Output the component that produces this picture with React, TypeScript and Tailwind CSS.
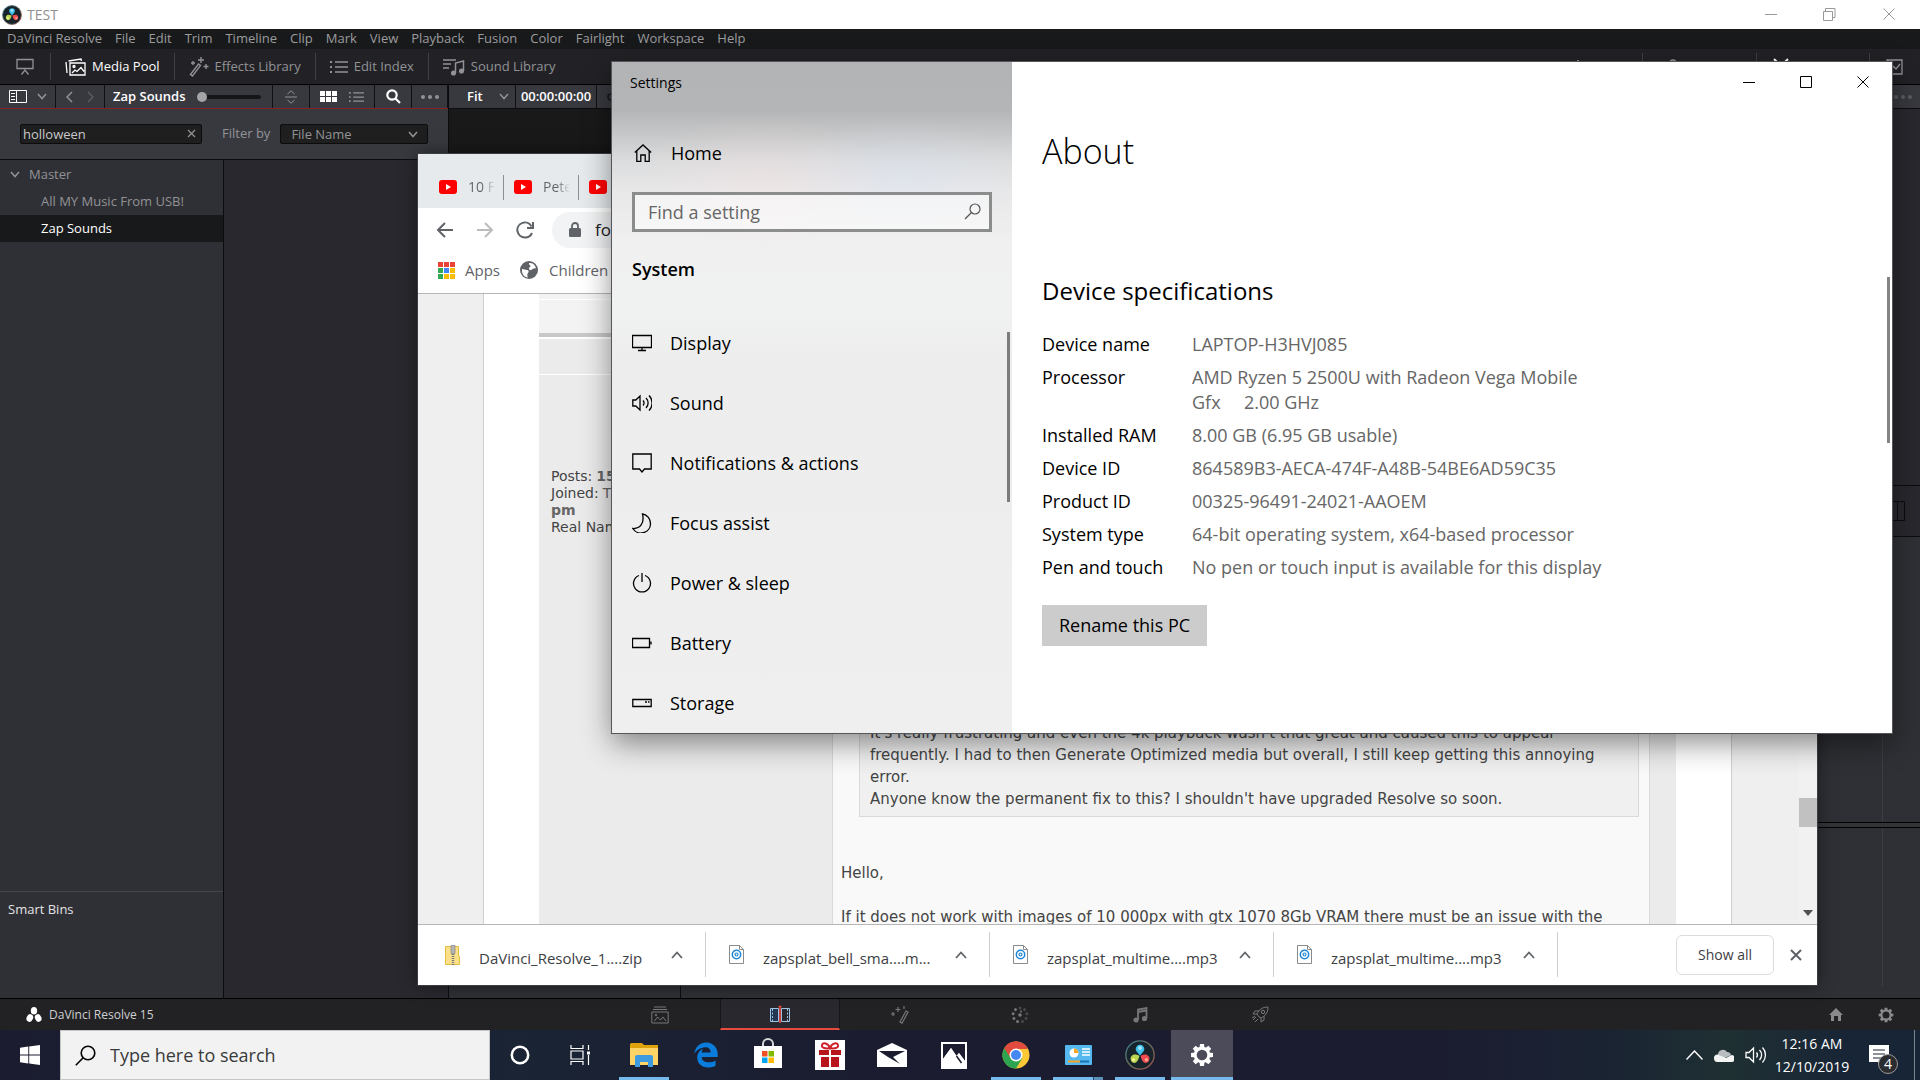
import type { ReactNode } from 'react'
import { FaEdgeLegacy } from 'react-icons/fa'

const MENUS = [
  'DaVinci Resolve', 'File', 'Edit', 'Trim', 'Timeline', 'Clip', 'Mark', 'View',
  'Playback', 'Fusion', 'Color', 'Fairlight', 'Workspace', 'Help',
]

const SPECS = [
  ['Device name', 'LAPTOP-H3HVJ085'],
  ['Processor', 'AMD Ryzen 5 2500U with Radeon Vega Mobile Gfx     2.00 GHz'],
  ['Installed RAM', '8.00 GB (6.95 GB usable)'],
  ['Device ID', '864589B3-AECA-474F-A48B-54BE6AD59C35'],
  ['Product ID', '00325-96491-24021-AAOEM'],
  ['System type', '64-bit operating system, x64-based processor'],
  ['Pen and touch', 'No pen or touch input is available for this display'],
]

const DOWNLOADS = [
  { name: 'DaVinci_Resolve_1....zip', zip: true },
  { name: 'zapsplat_bell_sma....m...', zip: false },
  { name: 'zapsplat_multime....mp3', zip: false },
  { name: 'zapsplat_multime....mp3', zip: false },
]

interface IconProps {
  w: number
  h: number
  className?: string
  stroke?: number
  children: ReactNode
}

// Line icon drawn 1:1 in pixels
function Icon({ w, h, className = '', stroke = 1, children }: IconProps) {
  return (
    <svg
      width={w}
      height={h}
      viewBox={`0 0 ${w} ${h}`}
      fill="none"
      stroke="currentColor"
      strokeWidth={stroke}
      className={`shrink-0 ${className}`}
      aria-hidden="true"
    >
      {children}
    </svg>
  )
}

function Chevron({ className = '' }: { className?: string }) {
  return (
    <Icon w={10} h={7} stroke={1.5} className={className}>
      <path d="M1 1l4 4.5L9 1" />
    </Icon>
  )
}

function ResolveLogo({ size }: { size: number }) {
  return (
    <svg width={size} height={size} viewBox="0 0 28 28" className="shrink-0" aria-hidden="true">
      <circle cx="14" cy="14" r="13.2" fill="#17242c" stroke="url(#ring)" strokeWidth="1.2" />
      <path d="M14 14.5C10.5 11 10 9.500 10 8.500a4 4 0 018 0c0 1-.5 2.500-4 6z" fill="#3fc0ea" />
      <path d="M13.500 14.800c-1.200 4.800-2.600 6.200-4.300 6.700A4 4 0 017.300 14c1.700-.6 3.200-.5 6.200.8z" fill="#b9d653" />
      <path d="M14.500 14.800c1.200 4.800 2.600 6.200 4.300 6.700A4 4 0 0020.700 14c-1.700-.6-3.200-.5-6.200.8z" fill="#ee4b50" />
      <circle cx="14" cy="7.500" r="1.800" fill="#a5e6fb" />
      <circle cx="8" cy="18.500" r="1.600" fill="#f3ef8a" />
      <circle cx="20" cy="18.500" r="1.600" fill="#fba08f" />
      <defs>
        <linearGradient id="ring" x1="0" y1="0" x2="1" y2="1">
          <stop offset="0" stopColor="#3b7f96" />
          <stop offset=".5" stopColor="#6e6f5a" />
          <stop offset="1" stopColor="#a0524a" />
        </linearGradient>
      </defs>
    </svg>
  )
}

function GearIcon({ size, className = '' }: { size: number; className?: string }) {
  const teeth = [0, 45, 90, 135, 180, 225, 270, 315]
  return (
    <svg width={size} height={size} viewBox="0 0 24 24" className={className} aria-hidden="true">
      <circle cx="12" cy="12" r="6.800" fill="none" stroke="currentColor" strokeWidth="3" />
      {teeth.map((a) => (
        <path key={a} d="M10 1h4l.6 4.500h-5.200z" fill="currentColor" transform={`rotate(${a} 12 12)`} />
      ))}
    </svg>
  )
}

function SpeakerIcon({ className = '' }: { className?: string }) {
  return (
    <Icon w={22} h={18} stroke={1.3} className={className}>
      <path d="M1 6.500h3L8.500 2v14L4 11.500H1zM11.500 6.500a4 4 0 010 5M14.500 4a7 7 0 010 10M17.500 1.500a11 11 0 010 15" />
    </Icon>
  )
}

function ToolButton({ label, active, children }: { label: string; active?: boolean; children: ReactNode }) {
  return (
    <button
      className={`flex h-[27px] items-center gap-[6px] border-l border-[#3e3e43] px-[14px] text-[13px] ${
        active ? 'text-white' : 'text-[#929296]'
      }`}
    >
      {children}
      {label}
    </button>
  )
}

function ListIcon({ className = '' }: { className?: string }) {
  return (
    <Icon w={18} h={14} stroke={2} className={className}>
      <path d="M0 2h2M0 7h2M0 12h2" />
      <path d="M5 2h13M5 7h13M5 12h13" strokeWidth={1.5} />
    </Icon>
  )
}

function ResolveHeader() {
  return (
    <>
      <div className="flex h-[29px] items-center bg-white text-[#8f8f8f]">
        <div className="flex flex-1 items-center gap-[5px] pl-[2px] text-[14px]">
          <ResolveLogo size={20} />
          TEST
        </div>
        <div className="flex text-[#999]">
          <button aria-label="Minimize" className="flex w-[58px] justify-center">
            <Icon w={12} h={12}><path d="M0 6.500h12" /></Icon>
          </button>
          <button aria-label="Restore" className="flex w-[58px] justify-center">
            <Icon w={13} h={13}><path d="M.5 3.500h9v9h-9zM2.500 3.500v-3h9.500v9h-2.500" /></Icon>
          </button>
          <button aria-label="Close" className="flex w-[62px] justify-center">
            <Icon w={12} h={12}><path d="M.5.500l11 11M11.500.500l-11 11" /></Icon>
          </button>
        </div>
      </div>
      <nav className="flex h-5 items-center gap-[13px] bg-[#18191b] pl-[7px] text-[13px] text-[#9c9c9e]">
        {MENUS.map((m) => (
          <button key={m}>{m}</button>
        ))}
      </nav>
      <div className="flex h-[35px] items-center bg-[#222226] text-[#929296]">
        <button aria-label="Layout" className="flex w-[50px] justify-center">
          <Icon w={18} h={18} stroke={1.3}>
            <path d="M1 1.500h16v9h-16zM5.500 16.500l3.500-4.500 3.500 4.500" />
          </Icon>
        </button>
        <ToolButton label="Media Pool" active>
          <Icon w={21} h={18} stroke={1.3}>
            <path d="M1 4l1 11M3.500 3l12.500-2 .5 2M5 5h15v12H5zM7 15l3-3 2 1.500 4-4 3 4" />
            <circle cx="9" cy="8.500" r="1" />
          </Icon>
        </ToolButton>
        <ToolButton label="Effects Library">
          <Icon w={20} h={20} stroke={1.4}>
            <path d="M1.500 17.500l8-10.500 2 1.500-8 10.500zM12 0v6M9 3h6M17 7v5M14.500 9.500h5M4 4v4M2 6h4" />
          </Icon>
        </ToolButton>
        <ToolButton label="Edit Index">
          <ListIcon />
        </ToolButton>
        <ToolButton label="Sound Library">
          <Icon w={22} h={18} stroke={1.5}>
            <path d="M0 2h13M0 6h8M0 10h6M12.500 15V5l8-2v10" />
            <circle cx="10.500" cy="15" r="1.800" fill="currentColor" />
            <circle cx="18.500" cy="13" r="1.800" fill="currentColor" />
          </Icon>
        </ToolButton>
        <div className="ml-auto flex">
          <button aria-label="Mixer" className="flex h-[27px] w-[85px] items-center pl-[14px]">
            <Icon w={16} h={16} stroke={2}><path d="M2 2v13M7 1v14M12 2v13" strokeDasharray="3 2" /></Icon>
          </button>
          <button aria-label="Metadata" className="flex h-[27px] w-[114px] items-center border-l border-[#3e3e43] pl-[22px]">
            <Icon w={16} h={16} stroke={1.3}><circle cx="8" cy="5" r="4" /></Icon>
          </button>
          <button aria-label="Inspector" className="flex h-[27px] w-[113px] items-center border-l border-[#3e3e43] pl-4 text-white">
            <Icon w={16} h={18} stroke={2}><path d="M1 1l14 14M15 1L1 15" /></Icon>
          </button>
          <button aria-label="Expand" className="flex h-[27px] w-[51px] items-center border-l border-[#3e3e43] pl-4">
            <Icon w={17} h={16} stroke={1.3}><path d="M1 1h15v14H1zM7 7l3 3 4-5" /></Icon>
          </button>
        </div>
      </div>
    </>
  )
}

function MediaPool() {
  return (
    <div className="flex w-[449px] shrink-0 flex-col border-r border-[#0c0c0e]">
      <div className="flex h-6 items-center border-b border-[#8a2323] bg-[#38393f] text-[#929296] *:h-full *:border-r *:border-[#101012]">
        <button aria-label="Bin list" className="flex w-14 items-center gap-[10px] pl-[9px]">
          <Icon w={18} h={13} className="text-white">
            <path d="M.5.500h17v12H.5zM7.500.500v12M2 3.500h4M2 6.500h4M2 9.500h4" />
          </Icon>
          <Chevron />
        </button>
        <div className="flex w-[49px] items-center justify-center gap-[14px]">
          <button aria-label="Back"><Icon w={7} h={12} stroke={1.5}><path d="M6 1L1 6l5 5" /></Icon></button>
          <button aria-label="Forward" className="text-[#5c5c62]"><Icon w={7} h={12} stroke={1.5}><path d="M1 1l5 5-5 5" /></Icon></button>
        </div>
        <div className="flex w-[168px] items-center gap-[11px] pl-2 text-[13px] font-semibold text-white">
          Zap Sounds
          <input type="range" aria-label="Thumbnail size" defaultValue={0}
            className="h-1 w-[64px] appearance-none rounded-full bg-[#161618] [&::-webkit-slider-thumb]:size-[10px] [&::-webkit-slider-thumb]:appearance-none [&::-webkit-slider-thumb]:rounded-full [&::-webkit-slider-thumb]:bg-[#a5a5a8]"
          />
        </div>
        <button aria-label="Sort" className="flex w-[37px] items-center justify-center">
          <Icon w={12} h={14}><path d="M2.500 4L6 .8 9.500 4M0 7h12M2.500 10L6 13.200 9.500 10" /></Icon>
        </button>
        <div className="flex w-[65px] items-center gap-3 pl-[10px]">
          <button aria-label="Thumbnails" className="text-white">
            <Icon w={17} h={11} stroke={5}><path d="M0 2.500h5M6 2.500h5M12 2.500h5M0 8.500h5M6 8.500h5M12 8.500h5" /></Icon>
          </button>
          <button aria-label="List"><ListIcon className="h-3 w-[15px]" /></button>
        </div>
        <button aria-label="Search" className="flex w-[37px] items-center justify-center text-white">
          <Icon w={15} h={15} stroke={2.2}><circle cx="6" cy="6" r="4.700" /><path d="M9.500 9.500L14 14" /></Icon>
        </button>
        <button aria-label="Options" className="flex flex-1 items-center justify-center">
          <Icon w={18} h={4} className="fill-current stroke-none"><circle cx="2" cy="2" r="2" /><circle cx="9" cy="2" r="2" /><circle cx="16" cy="2" r="2" /></Icon>
        </button>
      </div>
      <div className="flex h-[51px] items-center border-b border-[#0c0c0e] bg-[#38393f] pl-5 text-[13px] text-[#929296]">
        <div className="relative">
          <input aria-label="Search clips" defaultValue="holloween"
            className="h-5 w-[182px] rounded-xs border border-[#0c0c0e] bg-[#1f1f20] px-[2px] text-[#c8c8ca] outline-none" />
          <button aria-label="Clear" className="absolute top-[5px] right-[6px]">
            <Icon w={9} h={9} stroke={1.3}><path d="M1 1l7 7M8 1L1 8" /></Icon>
          </button>
        </div>
        <label htmlFor="filter" className="ml-5">Filter by</label>
        <div className="relative ml-[10px]">
          <select id="filter" className="h-5 w-[148px] appearance-none rounded-xs border border-[#0c0c0e] bg-[#1f1f20] pl-[10px] outline-none">
            <option>File Name</option>
          </select>
          <Chevron className="pointer-events-none absolute top-[7px] right-[10px]" />
        </div>
      </div>
      <div className="flex min-h-0 flex-1">
        <div className="flex w-[224px] flex-col border-r border-[#0c0c0e] bg-[#2f3035] pt-px text-[13px] text-[#929296]">
          <button className="flex h-[27px] items-center gap-[9px] pl-[10px]"><Chevron />Master</button>
          <button className="h-[27px] pl-[41px] text-left">All MY Music From USB!</button>
          <button className="h-[27px] bg-[#18191b] pl-[41px] text-left text-white">Zap Sounds</button>
          <div className="mt-auto h-[107px] border-t border-[#45464b] px-2 pt-2 text-[#e4e4e6]">Smart Bins</div>
        </div>
        <div className="flex-1 bg-[#29282e]" />
      </div>
    </div>
  )
}

function Viewer() {
  return (
    <div className="flex min-w-0 flex-1 flex-col">
      <div className="flex h-6 items-center border-b border-[#0c0c0e] bg-[#38393f] text-[13px] font-semibold text-white">
        <button className="flex h-full w-[67px] items-center justify-between border-r border-[#101012] pr-[6px] pl-[18px]">
          Fit
          <Chevron className="text-[#929296]" />
        </button>
        <span className="flex h-full w-[81px] items-center justify-center border-r border-[#101012]">00:00:00:00</span>
        <Icon w={8} h={8} stroke={1.5} className="ml-[10px] text-[#17171a]"><circle cx="4" cy="4" r="3" /></Icon>
        <Icon w={18} h={4} className="mr-2 ml-auto fill-[#5c5c62] stroke-none"><circle cx="2" cy="2" r="2" /><circle cx="9" cy="2" r="2" /><circle cx="16" cy="2" r="2" /></Icon>
      </div>
      <div className="flex h-[376px]">
        <div className="flex-1 bg-[#191919]" />
        <div className="w-[240px] bg-[#29282e]" />
      </div>
      <div className="flex h-[52px] items-center justify-end border-y border-[#0c0c0e] bg-[#29282e] pr-[15px] text-[#0c0c0e]">
        <Icon w={20} h={20}><path d="M.5.500h19v19H.5zM12.500.500v19" /></Icon>
      </div>
      <div className="flex min-h-0 flex-1 bg-[#2f3035]">
        <div className="w-[232px] border-r border-[#0c0c0e]" />
        <div className="flex flex-1 flex-col pb-3">
          <div className="flex flex-1 justify-end"><div className="w-[38px] border-l border-[#3c3d42]" /></div>
          <div className="h-[6px] border-y border-black bg-[#333438]" />
          <div className="flex h-[158px] justify-end"><div className="w-[38px] border-l border-[#3c3d42]" /></div>
        </div>
      </div>
    </div>
  )
}

function PageBar() {
  const pages = [
    { name: 'Media', icon: <Icon w={18} h={18}><path d="M3 1h12M2 3.500h14M.8 6h16.400v11H.8zM3.500 15l3-4 3 3 2.500-3 3 4" /><circle cx="5" cy="9" r=".8" /></Icon> },
    {
      name: 'Edit',
      icon: (
        <Icon w={20} h={18} className="text-[#9cc3e4]">
          <path d="M.5 3.500h8v13h-8z" fill="#223551" />
          <path d="M11.500 3.500h8v13h-8z" />
          <path d="M2.500 4v12M17.500 4v12" strokeDasharray="2 1.500" />
          <path d="M10 2v16M8.500 1.500h3" stroke="#e64b3d" strokeWidth={1.6} />
        </Icon>
      ),
    },
    { name: 'Fusion', icon: <Icon w={20} h={18} stroke={1.2}><path d="M10 16l6-11 2 1.200-6 11zM8 1v5M5.500 3.500h5M3 6v4M1 8h4M14 0v3" /></Icon> },
    {
      name: 'Color',
      icon: (
        <Icon w={18} h={18} className="fill-current stroke-none">
          {[0, 40, 80, 120, 160, 200, 240, 280, 320].map((a) => (
            <circle key={a} cx="9" cy="2" r="1.500" opacity={a > 180 ? 1 : 0.45} transform={`rotate(${a} 9 9)`} />
          ))}
          <circle cx="9" cy="9" r="1.800" />
          <circle cx="10" cy="5.500" r="1" />
        </Icon>
      ),
    },
    { name: 'Fairlight', icon: <Icon w={15} h={16} stroke={1.8}><path d="M5 13V2.500L13.500 1v10.500M5 5l8.500-1.500" /><circle cx="3" cy="13" r="1.700" fill="currentColor" /><circle cx="11.500" cy="11.500" r="1.700" fill="currentColor" /></Icon> },
    { name: 'Deliver', icon: <Icon w={18} h={18}><path d="M6 8c2-4 5-7 11-7 0 6-3 9-7 11l-2-1zM6 8H2l2-3h4M10 12v4l3-2v-4M5 11l-3 3M7 13l-3 3M4 10l-3 2" /><circle cx="12" cy="6" r="1.700" /></Icon> },
  ]
  return (
    <div className="flex h-8 items-center border-t border-black bg-[#222225] text-[#77777b]">
      <div className="flex flex-1 items-center gap-[7px] pl-[26px] text-[12px] text-[#cfcfd1]">
        <Icon w={16} h={15} className="fill-white stroke-none">
          <ellipse cx="8" cy="3.800" rx="3.200" ry="3.800" />
          <ellipse cx="3.800" cy="11" rx="3.200" ry="3.900" transform="rotate(25 3.800 11)" />
          <ellipse cx="12.200" cy="11" rx="3.200" ry="3.900" transform="rotate(-25 12.200 11)" />
        </Icon>
        DaVinci Resolve 15
      </div>
      <div className="flex h-full">
        {pages.map((p) => (
          <button
            key={p.name}
            aria-label={p.name}
            className={`flex w-[120px] items-center justify-center ${
              p.name === 'Edit' ? 'border-x border-b-2 border-x-[#161618] border-b-[#e64b3d] bg-[#29282e]' : ''
            }`}
          >
            {p.icon}
          </button>
        ))}
      </div>
      <div className="flex flex-1 items-center justify-end gap-[35px] pr-[26px] text-[#8a8a8d]">
        <button aria-label="Home">
          <Icon w={14} h={13} className="fill-current stroke-none"><path d="M7 0l7 7h-2v6H9V8H5v5H2V7H0z" /></Icon>
        </button>
        <button aria-label="Project settings"><GearIcon size={16} /></button>
      </div>
    </div>
  )
}

function YouTubeIcon() {
  return (
    <svg width="18" height="14" viewBox="0 0 18 14" className="shrink-0" aria-hidden="true">
      <rect width="18" height="14" rx="3" fill="#f00" />
      <path d="M7 4l5 3-5 3z" fill="#fff" />
    </svg>
  )
}

function FileIcon({ zip }: { zip: boolean }) {
  if (zip) {
    return (
      <svg width="15" height="20" viewBox="0 0 15 20" className="shrink-0" aria-hidden="true">
        <path d="M.5 1.500h13v10h1v8H.5z" fill="#fbe08a" stroke="#e3bd3f" />
        <rect x="6" y="0" width="4" height="9" rx="1" fill="#b5b5b5" stroke="#777" strokeWidth=".6" />
        <path d="M8 9v11" stroke="#777" strokeWidth="2.500" strokeDasharray="1 1" />
      </svg>
    )
  }
  return (
    <svg width="15" height="19" viewBox="0 0 15 19" className="shrink-0" aria-hidden="true">
      <path d="M.5.500h10l4 4v14H.5z" fill="#fff" stroke="#8b8b8b" />
      <path d="M10.500.500v4h4" fill="none" stroke="#8b8b8b" />
      <circle cx="7.500" cy="9.500" r="4.200" fill="none" stroke="#1f86d6" strokeWidth="1.500" />
      <circle cx="7.500" cy="9.500" r="1.500" fill="none" stroke="#1f86d6" strokeWidth="1.200" />
    </svg>
  )
}

function BrowserWindow() {
  const appColors = ['#ea4335', '#ea4335', '#ea4335', '#34a853', '#4285f4', '#fbbc05', '#34a853', '#fbbc05', '#fbbc05']
  return (
    <section className="absolute top-[154px] right-[103px] bottom-[95px] left-[418px] flex flex-col overflow-hidden bg-white text-[#5f6368] shadow-[0_0_0_1px_#3c3d40,0_0_16px_rgba(0,0,0,0.5)]">
      <div className="flex h-[54px] shrink-0 items-center bg-[#e6eaed] pt-3 pl-[21px] text-[14px]">
        {['10 F', 'Pete', ''].map((t, i) => (
          <div key={i} className="mr-[10px] flex h-[25px] w-[65px] items-center gap-[11px] overflow-hidden border-r border-[#8b8e92] pb-px">
            <YouTubeIcon />
            <span className="w-[27px] overflow-hidden bg-linear-to-r from-[#5f6368] from-50% to-transparent bg-clip-text whitespace-nowrap text-transparent">{t}</span>
          </div>
        ))}
      </div>
      <div className="flex h-[45px] shrink-0 items-center pb-px pl-[18px]">
        <button aria-label="Back"><Icon w={18} h={16} stroke={2}><path d="M17 8H2M9 1L2 8l7 7" /></Icon></button>
        <button aria-label="Forward" className="ml-[22px] text-[#babcbe]"><Icon w={18} h={16} stroke={2}><path d="M1 8h15M9 1l7 7-7 7" /></Icon></button>
        <button aria-label="Reload" className="ml-[22px]">
          <Icon w={18} h={18} stroke={2}><path d="M15.500 5.500A7.500 7.500 0 109 16.500a7.500 7.500 0 007-4.500M17 1v6h-6" /></Icon>
        </button>
        <div className="ml-[18px] flex h-9 flex-1 items-center gap-[14px] rounded-full bg-[#f1f3f4] pl-[17px] text-[17px] text-[#202124]">
          <svg width="12" height="16" viewBox="0 0 12 16" aria-hidden="true">
            <rect y="6" width="12" height="9" rx="1.500" fill="#5f6368" />
            <path d="M3 6V4a3 3 0 016 0v2" fill="none" stroke="#5f6368" strokeWidth="1.800" />
          </svg>
          fo
        </div>
      </div>
      <div className="flex h-[41px] shrink-0 items-center border-b border-[#b6b6b6] pb-[6px] pl-5 text-[15px]">
        <div className="grid grid-cols-3 gap-px">
          {appColors.map((c, i) => (
            <span key={i} className="size-[5px]" style={{ backgroundColor: c }} />
          ))}
        </div>
        <span className="ml-[10px]">Apps</span>
        <svg width="18" height="18" viewBox="0 0 18 18" className="ml-[20px]" aria-hidden="true">
          <circle cx="9" cy="9" r="9" fill="#5f6368" />
          <path d="M2 8c2 0 3 1 5 1s2 2 1 3-1 3 0 4.500C4 16 1.500 13 2 8zM9 2c3-.5 6 1.500 7 5-2 1-3 0-4 1.500s-3 .5-3-1 2-1.500 1.500-2.500S8.500 3.500 9 2z" fill="#fff" />
        </svg>
        <span className="ml-[11px] whitespace-nowrap">Children L</span>
      </div>

      <div className="flex min-h-0 flex-1 font-['DejaVu_Sans',sans-serif] text-[#444]">
        <div className="w-[66px] shrink-0 border-r border-[#cfcfcf] bg-[#efefef]" />
        <div className="w-[55px] shrink-0" />
        <article className="flex min-w-0 flex-1 flex-col">
          <div className="h-[5px] shrink-0 bg-[#f3f3f3]" />
          <div className="mt-px h-[33px] shrink-0 bg-[#f3f3f3]" />
          <div className="mb-[2px] h-1 shrink-0 bg-[#c8c8c8]" />
          <div className="mb-px h-[35px] shrink-0 bg-[#ebebeb]" />
          <div className="flex min-h-0 flex-1 bg-[#ebebeb] pr-[26px]">
            <dl className="w-[293px] shrink-0 pt-[93px] pl-3 text-[14px] leading-[17px]">
              <div className="flex gap-1"><dt>Posts:</dt><dd className="font-bold text-[#666]">153</dd></div>
              <div className="flex gap-1"><dt>Joined:</dt><dd className="text-[#666]">T</dd></div>
              <dd className="font-bold text-[#666]">pm</dd>
              <dt>Real Name:</dt>
            </dl>
            <div className="flex flex-1 flex-col justify-end overflow-hidden border-x border-[#d9d9d9] bg-[#f9f9f9] text-[15px] leading-[22px]">
              <blockquote className="mr-[10px] ml-[26px] border border-[#d9d9d9] bg-[#f0f0f0] px-[10px] pb-[6px]">
                <p>It's really frustrating and even the 4k playback wasn't that great and caused this to appear frequently. I had to then Generate Optimized media but overall, I still keep getting this annoying error.</p>
                <p>Anyone know the permanent fix to this? I shouldn't have upgraded Resolve so soon.</p>
              </blockquote>
              <p className="mt-[45px] ml-2">Hello,</p>
              <p className="mt-[22px] -mb-[4px] ml-2 whitespace-nowrap">If it does not work with images of 10 000px with gtx 1070 8Gb VRAM there must be an issue with the</p>
            </div>
          </div>
        </article>
        <div className="w-[55px] shrink-0" />
        <div className="w-[68px] shrink-0 border-l border-[#cfcfcf] bg-[#efefef]" />
        <div className="flex w-[18px] shrink-0 flex-col items-center justify-end bg-[#f1f1f1] pb-2">
          <div className="mb-[83px] h-[29px] w-full bg-[#c1c1c1]" />
          <Icon w={10} h={6} className="fill-[#505050] stroke-none"><path d="M0 0h10L5 6z" /></Icon>
        </div>
      </div>

      <div className="flex h-[61px] shrink-0 items-center border-t border-[#b6b6b6] pb-px pl-1 text-[15px] text-[#3c4043]">
        {DOWNLOADS.map((d, i) => (
          <button key={i} className="flex h-[45px] w-[284px] items-center border-r border-[#cfcfcf] pr-[22px] pl-[23px]">
            <FileIcon zip={d.zip} />
            <span className="mt-2 ml-[19px]">{d.name}</span>
            <Icon w={12} h={8} stroke={1.8} className="ml-auto text-[#5f6368]"><path d="M1 7l5-5.500L11 7" /></Icon>
          </button>
        ))}
        <button className="mr-4 ml-auto h-10 w-[98px] rounded-md border border-[#dadce0] text-[14px]">Show all</button>
        <button aria-label="Close" className="mr-[15px]">
          <Icon w={12} h={12} stroke={2} className="text-[#5f6368]"><path d="M1 1l10 10M11 1L1 11" /></Icon>
        </button>
      </div>
    </section>
  )
}

const NAV = [
  { name: 'Display', icon: <path d="M.5 2.500h19v12H.5zM10 14.500v3M6 17.500h8" /> },
  { name: 'Sound', icon: <path d="M.8 7h3L8 3v14l-4.200-4h-3zM11 7.500a3.500 3.500 0 010 5M14 5a7 7 0 010 10M17 2.500a10.500 10.500 0 010 15" /> },
  { name: 'Notifications & actions', icon: <path d="M.8 1h18.400v15h-6.700L10 19l-2.500-3H.8z" /> },
  { name: 'Focus assist', icon: <path d="M10.500.8A10 10 0 0118.500 11 9.500 9 0 01.8 15.500c7 .5 12-5 9.700-14.700z" /> },
  { name: 'Power & sleep', icon: <path d="M7 2.500a8.500 8.500 0 106 0M10 0v9" /> },
  { name: 'Battery', icon: <path d="M.5 5.500h17v9H.5zM19 8.500v3" /> },
  { name: 'Storage', icon: <path d="M.8 6.500h18.400v7H.8zM13 9h2M16 9h1.500" /> },
]

function SettingsWindow() {
  return (
    <section className="absolute top-[62px] right-[28px] left-[612px] flex h-[671px] bg-white text-black shadow-[0_0_0_1px_#55565a,0_10px_28px_rgba(0,0,0,0.45)]">
      <aside className="relative flex w-[400px] shrink-0 flex-col overflow-hidden bg-[radial-gradient(ellipse_120px_70px_at_150px_120px,rgba(255,225,225,0.25),transparent),radial-gradient(ellipse_120px_60px_at_290px_115px,rgba(215,228,250,0.3),transparent),linear-gradient(to_bottom,#b2b3b5_0,#b4b5b7_48px,#c6c7c8_72px,#dbdcdd_98px,#e8e8e9_130px,#f0f0f1_180px,#f0f1f1_250px,#ededed_300px,#efefef_100%)] text-[18px]">
        <h1 className="mt-2 pl-[18px] text-[14px] leading-[26px]">Settings</h1>
        <button className="mt-[37px] flex h-10 items-center gap-[19px] pl-[22px]">
          <Icon w={18} h={18} stroke={1.3}><path d="M.8 8.500L9 1l8.200 7.500M2.800 7v10.300h4V11h4.400v6.300h4V7" /></Icon>
          Home
        </button>
        <div className="relative mx-5 mt-[19px]">
          <input aria-label="Find a setting" placeholder="Find a setting"
            className="h-10 w-full border-3 border-[#8b8d8d] bg-white/50 px-[13px] outline-none placeholder:text-[#666]" />
          <Icon w={17} h={17} stroke={1.2} className="absolute top-[11px] right-[11px] text-[#555]">
            <circle cx="11" cy="6" r="5" /><path d="M7.500 9.500L1 16" />
          </Icon>
        </div>
        <h2 className="mt-6 pl-5 leading-[26px] font-semibold">System</h2>
        <ul className="mt-[31px]">
          {NAV.map((n) => (
            <li key={n.name}>
              <button className="flex h-[60px] w-full items-center gap-[18px] pl-5">
                <Icon w={20} h={20} stroke={1.3}>{n.icon}</Icon>
                {n.name}
              </button>
            </li>
          ))}
        </ul>
        <div className="absolute top-[270px] right-[2px] h-[170px] w-[3px] bg-[#7c7c7c]" />
      </aside>
      <div className="relative flex-1 pl-[30px]">
        <div className="absolute top-0 right-px flex h-10 items-center">
          <button aria-label="Minimize" className="flex w-[57px] justify-center"><Icon w={12} h={12}><path d="M0 6.500h12" /></Icon></button>
          <button aria-label="Maximize" className="flex w-[57px] justify-center"><Icon w={12} h={12}><path d="M.5.500h11v11H.5z" /></Icon></button>
          <button aria-label="Close" className="flex w-[57px] justify-center"><Icon w={12} h={12}><path d="M.5.500l11 11M11.500.500l-11 11" /></Icon></button>
        </div>
        <h1 className="mt-[66px] text-[34px] leading-[46px] font-light">About</h1>
        <h2 className="mt-[101px] text-[24px] leading-[32px]">Device specifications</h2>
        <dl className="mt-[25px] grid w-[560px] grid-cols-[150px_410px] gap-y-2 text-[18px] leading-[25px]">
          {SPECS.map(([k, v]) => (
            <div key={k} className="contents">
              <dt>{k}</dt>
              <dd className="whitespace-pre-wrap text-[#666]">{v}</dd>
            </div>
          ))}
        </dl>
        <button className="mt-[25px] h-[41px] w-[165px] bg-[#ccc] text-[18px]">Rename this PC</button>
        <div className="absolute top-[215px] right-[2px] h-[166px] w-[3px] bg-[#848484]" />
      </div>
    </section>
  )
}

const APPS = [
  {
    name: 'File Explorer', open: true,
    icon: (
      <svg width="28" height="24" viewBox="0 0 28 24">
        <path d="M0 1.500A1.500 1.500 0 011.500 0H12l2 2h14v10H0z" fill="#e0a20b" />
        <path d="M0 5h28v17H0z" fill="#ffd466" />
        <path d="M5 24V14a2 2 0 012-2h14a2 2 0 012 2v10h-5v-5h-8v5z" fill="#3f9be0" />
      </svg>
    ),
  },
  { name: 'Edge', icon: <FaEdgeLegacy size={26} color="#0a7cdb" /> },
  {
    name: 'Store',
    icon: (
      <svg width="30" height="30" viewBox="0 0 30 30" className="-translate-y-0.5">
        <path d="M10 9V6a5 5 0 0110 0v3" fill="none" stroke="#d8d8d8" strokeWidth="2" />
        <path d="M1 8h28v22H1z" fill="#fff" />
        <path d="M9 13h5.500v5.500H9z" fill="#f25022" /><path d="M15.500 13H21v5.500h-5.500z" fill="#7fba00" />
        <path d="M9 19.500h5.500V25H9z" fill="#00a4ef" /><path d="M15.500 19.500H21V25h-5.500z" fill="#ffb900" />
      </svg>
    ),
  },
  {
    name: 'Gifts',
    icon: (
      <svg width="30" height="30" viewBox="0 0 30 30">
        <path d="M0 0h30v30H0z" fill="#fff" />
        <path d="M4 10h10v5H4zM16 10h10v5H16zM6 17h8v10H6zM16 17h8v10h-8z" fill="#b8141c" />
        <path d="M15 8C11 9 6 8 7 5s6-2 8 3c2-5 7-6 8-3s-4 4-8 3z" fill="none" stroke="#d0202a" strokeWidth="2" />
      </svg>
    ),
  },
  {
    name: 'Mail',
    icon: (
      <svg width="30" height="24" viewBox="0 0 30 24">
        <path d="M0 7L15 0l15 7v17H0z" fill="#fff" />
        <path d="M2 8h26L16 14l7 7-12-7z" fill="#1b1c30" />
      </svg>
    ),
  },
  {
    name: 'Photos',
    icon: (
      <svg width="26" height="27" viewBox="0 0 26 27">
        <path d="M0 0h26v27H0z" fill="#fff" />
        <path d="M2 2h22v17l-6-8-2.500 3L10 6 2 17z" fill="#1b1c30" />
        <path d="M2 17l8-11 5.500 8L18 11l6 8v5H2z" fill="#fff" />
        <path d="M15.500 14l5 7" stroke="#1b1c30" strokeWidth="1.500" />
      </svg>
    ),
  },
  {
    name: 'Chrome', open: true,
    icon: (
      <svg width="28" height="28" viewBox="0 0 28 28">
        <circle cx="14" cy="14" r="13.500" fill="#fcc934" />
        <path d="M14 14L2.300 7.250A13.500 13.500 0 0125.700 7.250H14z" fill="#e04a3f" />
        <path d="M14 14L2.300 7.250A13.500 13.500 0 0014 27.500l6-10z" fill="#2da44f" />
        <path d="M2.300 7.250L8.500 17 14 8h11.700A13.500 13.500 0 002.300 7.250z" fill="#e04a3f" />
        <circle cx="14" cy="14" r="6.500" fill="#fff" /><circle cx="14" cy="14" r="5" fill="#4688f1" />
      </svg>
    ),
  },
  {
    name: 'Control Panel', open: true,
    icon: (
      <svg width="27" height="20" viewBox="0 0 27 20">
        <rect width="27" height="20" rx="1" fill="#55b8ee" />
        <circle cx="9" cy="8" r="4.500" fill="#fff" /><path d="M9 8V3.500A4.500 4.500 0 0113.500 8z" fill="#f5a623" />
        <path d="M17 4h8M17 7h8M17 10h8" stroke="#fff" strokeWidth="1.500" />
        <path d="M3 16.500h12" stroke="#f5a623" strokeWidth="2" /><path d="M15 16.500h9" stroke="#1973b5" strokeWidth="2" />
      </svg>
    ),
  },
  { name: 'DaVinci Resolve', open: true, icon: <ResolveLogo size={30} /> },
  { name: 'Settings', open: true, active: true, icon: <GearIcon size={24} /> },
]

function Taskbar() {
  return (
    <footer className="flex h-[50px] shrink-0 bg-[linear-gradient(to_right,#1b1c30_0,#1a2434_27%,#1b1c30_45%,#1b1c30_75%,#1a2433_84%,#1f3033_90%,#182536_96%)] text-white">
      <button aria-label="Start" className="flex w-[60px] items-center justify-center">
        <svg width="20" height="20" viewBox="0 0 20 20" fill="#fff" aria-hidden="true">
          <path d="M0 2.800L8.300 1.600v8H0zM9.200 1.500L20 0v9.600H9.200zM0 10.400h8.300v8L0 17.200zM9.200 10.400H20V20L9.200 18.500z" />
        </svg>
      </button>
      <label className="flex w-[430px] items-center gap-[14px] border border-[#c6c6c6] bg-[#f2f2f2] pl-[14px] text-black">
        <Icon w={21} h={21} stroke={1.6}><circle cx="13" cy="8" r="6.800" /><path d="M8.200 12.800L.8 20.200" /></Icon>
        <input placeholder="Type here to search" aria-label="Type here to search" className="w-full bg-transparent text-[18px] outline-none placeholder:text-[#3a3a3a]" />
      </label>
      <button aria-label="Cortana" className="flex w-[60px] items-center justify-center">
        <Icon w={20} h={20} stroke={2.5}><circle cx="10" cy="10" r="8.200" /></Icon>
      </button>
      <button aria-label="Task View" className="mr-[3px] flex w-[60px] items-center justify-center">
        <Icon w={21} h={20} stroke={1.2}>
          <path d="M1 0v3.500h12V0M1 20v-3.500h12V20M1 6h12v8H1zM18.500 0v5M18.500 10v10" />
          <path d="M17 6.500h3v3h-3z" fill="currentColor" stroke="none" />
        </Icon>
      </button>
      {APPS.map((a) => (
        <button
          key={a.name}
          aria-label={a.name}
          className={`relative flex w-[62px] items-center justify-center ${a.active ? 'bg-[#4b4b5a]' : ''}`}
        >
          {a.icon}
          {a.open && (
            <span className={`absolute bottom-0 h-[3px] bg-[#76b9ed] ${a.active ? 'inset-x-0' : 'inset-x-[6px]'}`} />
          )}
          {a.name === 'Control Panel' && <span className="absolute right-[6px] bottom-0 h-[3px] w-[10px] border-l border-[#2f4a66] bg-[#5a8fb8]" />}
        </button>
      ))}
      <div className="ml-auto flex items-stretch">
        <button aria-label="Hidden icons" className="flex w-8 items-center justify-center"><Icon w={17} h={10} stroke={1.4}><path d="M.5 9.500l8-8.500 8 8.500" /></Icon></button>
        <button aria-label="OneDrive" className="flex w-7 items-center justify-center">
          <svg width="20" height="13" viewBox="0 0 20 13" aria-hidden="true">
            <path d="M4 5a5 5 0 019-2 4 4 0 014 3l-6 3-8-1z" fill="#b9bcc0" />
            <path d="M3.500 5.500L12 9l5.500-3A3.500 3.500 0 0117 13H4a3.700 3.700 0 01-.5-7.500z" fill="#f4f4f4" />
          </svg>
        </button>
        <button aria-label="Volume" className="flex w-9 items-center justify-center"><SpeakerIcon /></button>
        <div className="flex w-[76px] flex-col items-center justify-center text-[14px] leading-[23px]">
          <span>12:16 AM</span>
          <span>12/10/2019</span>
        </div>
        <button aria-label="Notifications" className="relative w-[64px] pl-[19px]">
          <Icon w={20} h={20} className="text-[#1b2535]">
            <path d="M0 0h20v17h-8l-3 3v-3H0z" fill="#fff" stroke="none" />
            <path d="M4 5h12M4 9h12M4 13h8" />
          </Icon>
          <span className="absolute top-6 left-7 flex size-5 items-center justify-center rounded-full border border-[#9a9a9a] bg-[#2a2c30] text-[14px] leading-none">4</span>
        </button>
        <div className="w-[6px] border-l border-[#7d838c]" />
      </div>
    </footer>
  )
}

export default function App() {
  return (
    <main className="relative flex h-screen w-full flex-col overflow-hidden bg-[#222226] font-['Open_Sans',sans-serif]">
      <ResolveHeader />
      <div className="flex min-h-0 flex-1 border-t border-black">
        <MediaPool />
        <Viewer />
      </div>
      <PageBar />
      <Taskbar />
      <BrowserWindow />
      <SettingsWindow />
    </main>
  )
}
